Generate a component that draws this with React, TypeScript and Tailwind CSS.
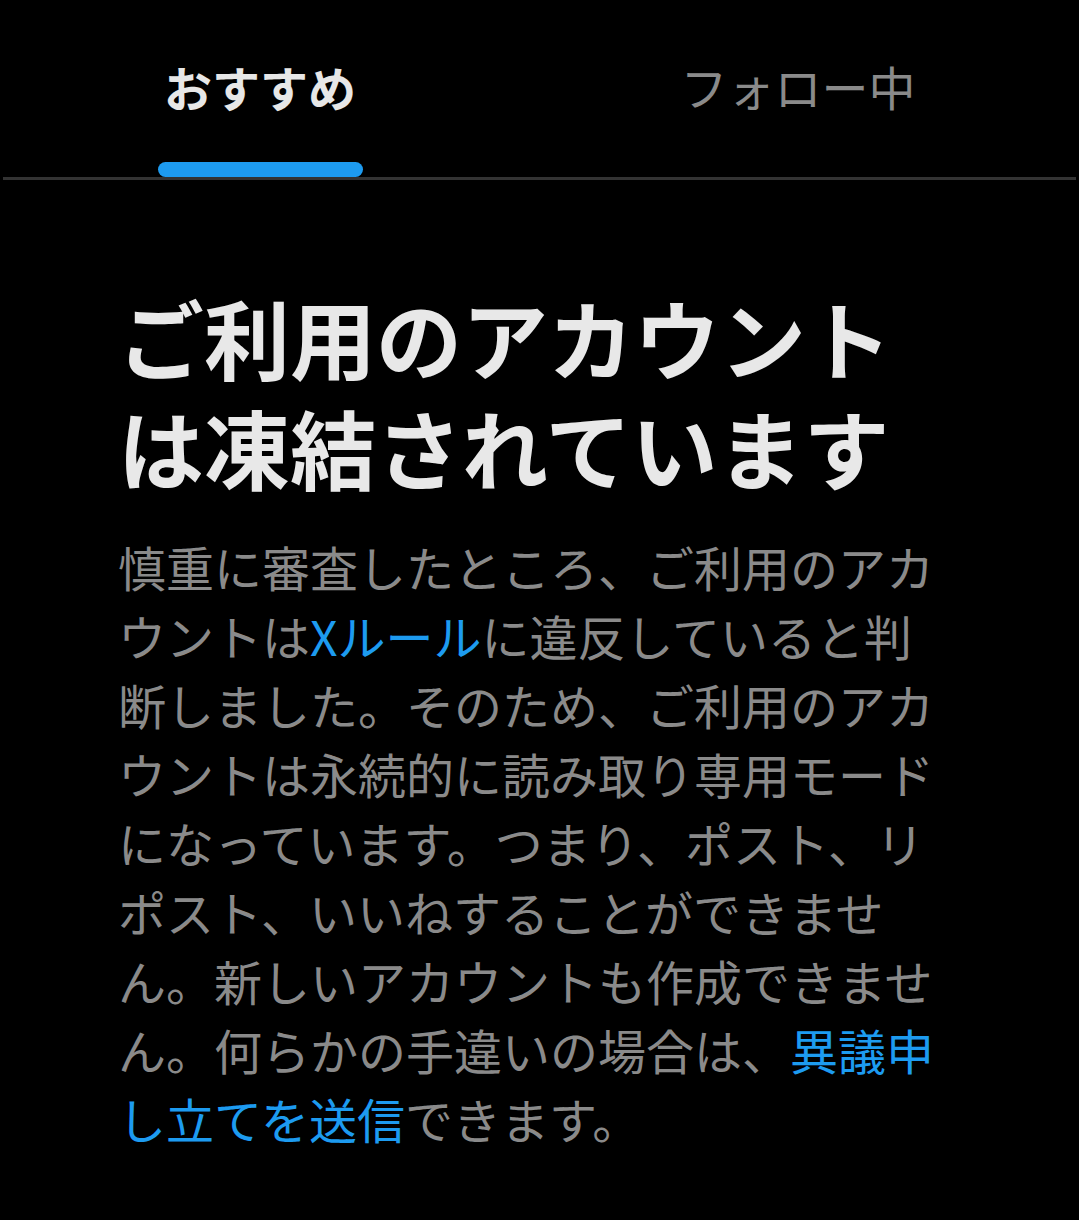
const jp = { fontFamily: '"Noto Sans CJK JP", "Noto Sans", sans-serif' };

const Link = ({ children }: { children: React.ReactNode }) => (
  <span className="text-[#1d9bf0]">{children}</span>
);

const bodyLines: React.ReactNode[] = [
  "慎重に審査したところ、ご利用のアカ",
  <>
    ウントは<Link>Xルール</Link>に違反していると判
  </>,
  "断しました。そのため、ご利用のアカ",
  "ウントは永続的に読み取り専用モード",
  "になっています。つまり、ポスト、リ",
  "ポスト、いいねすることができませ",
  "ん。新しいアカウントも作成できませ",
  <>
    ん。何らかの手違いの場合は、<Link>異議申</Link>
  </>,
  <>
    <Link>し立てを送信</Link>できます。
  </>,
];

export default function App() {
  return (
    <div className="w-[1079px] h-[1220px] bg-black overflow-hidden" style={jp}>
      {/* tabs */}
      <div className="grid grid-cols-[520px_556px] pt-[62px]">
        <div className="flex flex-col items-center">
          <span className="text-[48px] leading-[48px] font-bold text-[#e7e7e7]">
            おすすめ
          </span>
          <div className="mt-[52px] h-[15px] w-[205px] rounded-full bg-[#1d9bf0]" />
        </div>
        <div className="flex justify-center">
          <span className="text-[47px] leading-[48px] text-[#8a8a8a]">
            フォロー中
          </span>
        </div>
      </div>
      <div className="mx-[3px] h-[3px] bg-[#333333]" />

      {/* notice */}
      <div className="pl-[118px] pt-[102px]">
        <h1 className="text-[86px] leading-[110px] font-bold text-[#e8e8e8] whitespace-nowrap">
          <span className="block h-[110px]">ご利用のアカウント</span>
          <span className="block h-[110px]">は凍結されています</span>
        </h1>
        <div className="mt-[30px] text-[48px] leading-[69px] text-[#8a8a8a] whitespace-nowrap">
          {bodyLines.map((line, i) => (
            <p key={i} className="h-[69px]">
              {line}
            </p>
          ))}
        </div>
      </div>
    </div>
  );
}
